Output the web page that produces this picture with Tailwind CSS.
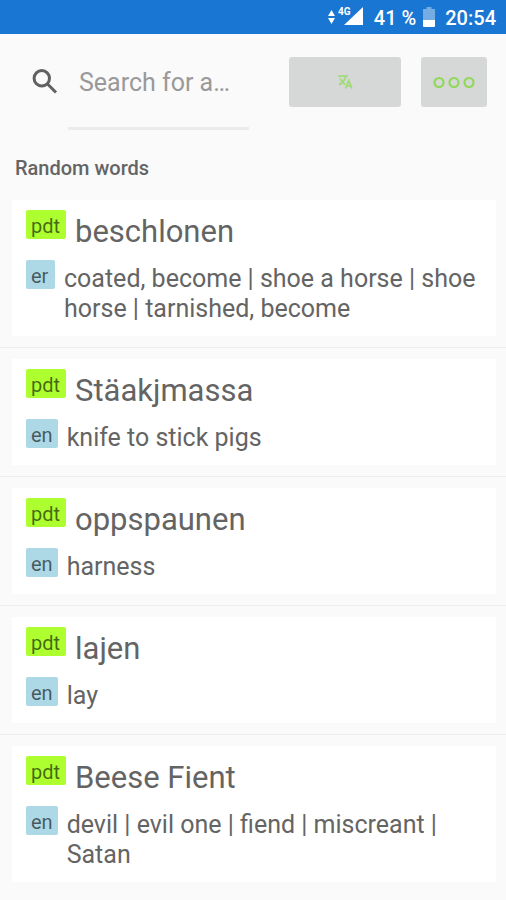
<!DOCTYPE html>
<html lang="en">
<head>
<meta charset="utf-8">
<meta name="viewport" content="width=device-width, initial-scale=1">
<title>Dictionary</title>
<script src="https://cdn.jsdelivr.net/npm/@tailwindcss/browser@4"></script>
</head>
<body class="min-h-screen overflow-x-hidden bg-[#fafafa] font-['Roboto',sans-serif] text-[#646464]">
  <div class="flex h-[34px] items-center justify-end bg-[#1976d2] pt-[2px] pr-[10px] text-[20px] font-medium text-white">
    <svg class="mr-[11px] h-[26px] w-9" viewBox="0 -2 36 26" fill="white" role="img" aria-label="4G signal">
      <path d="M4.500 3 8 9H1zM4.500 17 1 11h7z"/>
      <path d="M36 0v18H17z"/>
      <text x="11" y="8" font-size="10" font-weight="700" stroke="#1976d2" stroke-width="2" paint-order="stroke">4G</text>
    </svg>
    <span>41 %</span>
    <svg class="mx-[7px] h-[22px] w-3" viewBox="0 0 12 22" fill="white" role="img" aria-label="Battery"><path d="M3.500 0h5v2H12v11H0V2h3.500z" opacity=".4"/><path d="M0 13h12v6a1 1 0 0 1-1 1H1a1 1 0 0 1-1-1z"/></svg>
    <span class="ml-[3px]">20:54</span>
  </div>

  <header class="flex items-start pt-[23px] pr-[19px] pl-[30px]">
    <label for="q" class="mt-[9px] mr-[8px] block shrink-0">
      <svg class="h-[30px] w-[30px]" viewBox="0 0 30 30" fill="none" stroke="#606060" stroke-width="3" role="img" aria-label="Search"><circle cx="11.800" cy="12.300" r="7.700"/><path d="m17 17.500 9 9"/></svg>
    </label>
    <input id="q" type="text" placeholder="Search for a…" class="h-[73px] min-w-0 flex-1 border-b-3 border-[#ebebeb] bg-transparent pr-[12px] pb-[20px] pl-[11px] text-[25px] text-[#606060] outline-none placeholder:text-[#999999]">
    <button type="button" aria-label="Translate" class="ml-[40px] flex h-[50px] w-[112px] shrink-0 items-center justify-center rounded-[3px] bg-[#d6d7d7]">
      <svg class="h-4 w-4" viewBox="0 0 16 16" fill="none" stroke="#9cdc70" stroke-width="1.700"><path d="M1 2h10M9 2C8 6 5 9 2 11M3 4.500C4 7 6 9 8 10.500"/><path d="m8.500 14.500 3.200-8 3.200 8M9.800 12h4"/></svg>
    </button>
    <button type="button" aria-label="More options" class="ml-5 flex h-[50px] w-[66px] shrink-0 items-center justify-center rounded-[3px] bg-[#d6d7d7]">
      <svg class="h-3 w-[42px]" viewBox="0 0 42 12" fill="none" stroke="#8fd957" stroke-width="2.200"><circle cx="6" cy="6.500" r="4.500"/><circle cx="21" cy="6.500" r="4.500"/><circle cx="36" cy="6.500" r="4.500"/></svg>
    </button>
  </header>

  <main>
    <h1 class="px-[15px] pt-[26px] pb-[9px] text-[20px] leading-[24px] font-medium">Random words</h1>
    <ul class="divide-y divide-[#eeeeee]">
      <li class="py-[11px] pr-[10px] pl-3">
        <article class="bg-white px-[14px] pt-[10px] pb-3">
          <div class="flex items-start pb-[6px]"><span class="mr-[9px] min-w-10 rounded-[2px] bg-[#adff2f] px-[5px] pt-[3px] text-[20px] leading-[26px] text-black/60">pdt</span><h2 class="text-[31px] leading-[44px]">beschlonen</h2></div>
          <div class="flex items-start"><span class="mr-[9px] w-[29px] shrink-0 rounded-[2px] bg-[#add8e6] px-[5px] pt-[3px] text-[20px] leading-[26px] text-black/60">er</span><p class="pt-1 text-[25px] leading-[30px]">coated, become | shoe a horse | shoe horse | tarnished, become</p></div>
        </article>
      </li>
      <li class="py-[11px] pr-[10px] pl-3">
        <article class="bg-white px-[14px] pt-[10px] pb-3">
          <div class="flex items-start pb-[6px]"><span class="mr-[9px] min-w-10 rounded-[2px] bg-[#adff2f] px-[5px] pt-[3px] text-[20px] leading-[26px] text-black/60">pdt</span><h2 class="text-[31px] leading-[44px]">Stäakjmassa</h2></div>
          <div class="flex items-start"><span class="mr-[9px] rounded-[2px] bg-[#add8e6] px-[5px] pt-[3px] text-[20px] leading-[26px] text-black/60">en</span><p class="pt-1 text-[25px] leading-[30px]">knife to stick pigs</p></div>
        </article>
      </li>
      <li class="py-[11px] pr-[10px] pl-3">
        <article class="bg-white px-[14px] pt-[10px] pb-3">
          <div class="flex items-start pb-[6px]"><span class="mr-[9px] min-w-10 rounded-[2px] bg-[#adff2f] px-[5px] pt-[3px] text-[20px] leading-[26px] text-black/60">pdt</span><h2 class="text-[31px] leading-[44px]">oppspaunen</h2></div>
          <div class="flex items-start"><span class="mr-[9px] rounded-[2px] bg-[#add8e6] px-[5px] pt-[3px] text-[20px] leading-[26px] text-black/60">en</span><p class="pt-1 text-[25px] leading-[30px]">harness</p></div>
        </article>
      </li>
      <li class="py-[11px] pr-[10px] pl-3">
        <article class="bg-white px-[14px] pt-[10px] pb-3">
          <div class="flex items-start pb-[6px]"><span class="mr-[9px] min-w-10 rounded-[2px] bg-[#adff2f] px-[5px] pt-[3px] text-[20px] leading-[26px] text-black/60">pdt</span><h2 class="text-[31px] leading-[44px]">lajen</h2></div>
          <div class="flex items-start"><span class="mr-[9px] rounded-[2px] bg-[#add8e6] px-[5px] pt-[3px] text-[20px] leading-[26px] text-black/60">en</span><p class="pt-1 text-[25px] leading-[30px]">lay</p></div>
        </article>
      </li>
      <li class="py-[11px] pr-[10px] pl-3">
        <article class="bg-white px-[14px] pt-[10px] pb-3">
          <div class="flex items-start pb-[6px]"><span class="mr-[9px] min-w-10 rounded-[2px] bg-[#adff2f] px-[5px] pt-[3px] text-[20px] leading-[26px] text-black/60">pdt</span><h2 class="text-[31px] leading-[44px]">Beese Fient</h2></div>
          <div class="flex items-start"><span class="mr-[9px] rounded-[2px] bg-[#add8e6] px-[5px] pt-[3px] text-[20px] leading-[26px] text-black/60">en</span><p class="pt-1 text-[25px] leading-[30px]">devil | evil one | fiend | miscreant | Satan</p></div>
        </article>
      </li>
    </ul>
  </main>
</body>
</html>
